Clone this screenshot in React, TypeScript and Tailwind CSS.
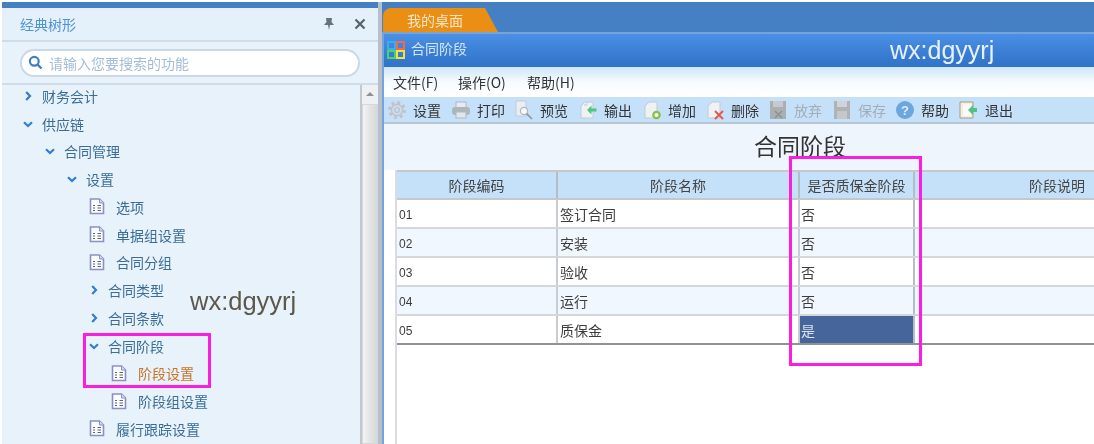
import React from "react";

const font = { fontFamily: '"Noto Sans CJK SC", "Liberation Sans", sans-serif' };

function Chevron({ open }: { open: boolean }) {
  return (
    <svg width="12" height="12" viewBox="0 0 12 12" className="shrink-0">
      <path
        d={open ? "M2 4.2 L6 8 L10 4.2" : "M4.2 2 L8 6 L4.2 10"}
        fill="none"
        stroke="#2f7fd0"
        strokeWidth="2.2"
      />
    </svg>
  );
}

function Doc() {
  return (
    <svg width="16" height="17" viewBox="0 0 16 17" className="shrink-0">
      <path d="M1.5 1 H10.5 L14.5 5 V15.5 H1.5 Z" fill="#fbfcfe" stroke="#8a90c6" strokeWidth="1.6" />
      <path d="M10.5 1 V5 H14.5" fill="#d5dcef" stroke="#8a90c6" strokeWidth="1" />
      <path d="M4 7.5 H6 M8.5 7.5 H12 M4 10 H6 M8.5 10 H12 M4 12.5 H6 M8.5 12.5 H12" stroke="#5a6672" strokeWidth="1.2" />
    </svg>
  );
}

function TreeRow({ label, pad, gap, chevron, doc, selected }: { label: string; pad: string; gap: string; chevron?: "open" | "closed"; doc?: boolean; selected?: boolean }) {
  return (
    <div className={`flex h-[27.75px] items-center ${pad} ${gap}`}>
      {chevron && <Chevron open={chevron === "open"} />}
      {doc && <Doc />}
      <span className={selected ? "text-[#c97428]" : "text-[#3a6e98]"}>{label}</span>
    </div>
  );
}

function ToolIcon({ kind }: { kind: string }) {
  const page = "M3 6 L7 2 H15 V18 H3 Z";
  return (
    <svg width="20" height="20" viewBox="0 0 20 20" className="shrink-0">
      {kind === "gear" && (
        <g fill="none" stroke="#c0c4c9">
          <circle cx="10" cy="10" r="7.5" strokeWidth="3" strokeDasharray="3 2.9" />
          <circle cx="10" cy="10" r="5.6" strokeWidth="1.6" />
          <circle cx="10" cy="10" r="2.4" strokeWidth="1.4" />
        </g>
      )}
      {kind === "print" && (
        <g>
          <rect x="5" y="2" width="10" height="6" fill="#e6ebf0" stroke="#b0b8c0" />
          <rect x="1" y="7" width="18" height="8" rx="3" fill="#aeb6bd" />
          <rect x="5" y="12" width="10" height="6" fill="#e2e7ec" stroke="#b0b8c0" />
        </g>
      )}
      {kind === "preview" && (
        <g fill="none">
          <path d="M2 1 H12 V16 H2 Z" fill="#e9eef3" stroke="#c5ccd3" />
          <circle cx="10" cy="11" r="3.6" fill="#f5f8fb" stroke="#aeb7bf" strokeWidth="1.2" />
          <path d="M12.6 13.6 L18 19" stroke="#8b959f" strokeWidth="1.6" />
        </g>
      )}
      {kind === "output" && (
        <g>
          <path d={page} fill="#eef2f5" stroke="#c3cad1" />
          <path d="M6 5 H9 V2" fill="none" stroke="#c3cad1" />
          <path d="M18.5 8.5 H13.5 V5.5 L9 10 L13.5 14.5 V11.5 H18.5 Z" fill="#4cc585" />
        </g>
      )}
      {kind === "add" && (
        <g>
          <path d={page} fill="#eef2f5" stroke="#c3cad1" />
          <circle cx="14.5" cy="15" r="3.2" fill="#f7fbf0" stroke="#86bf45" strokeWidth="2.2" />
        </g>
      )}
      {kind === "delete" && (
        <g>
          <path d={page} fill="#eef2f5" stroke="#c3cad1" />
          <path d="M10 11 L18 19 M18 11 L10 19" stroke="#e4594c" strokeWidth="2" />
        </g>
      )}
      {kind === "discard" && (
        <g>
          <path d="M2 1 H18 V19 H2 Z" fill="#aab0b2" />
          <rect x="5" y="1" width="10" height="6" fill="#c6cacc" />
          <path d="M7 11 L14 18 M14 11 L7 18" stroke="#8d9294" strokeWidth="1.6" />
        </g>
      )}
      {kind === "save" && (
        <g>
          <path d="M2 1 H18 V19 H2 Z" fill="#aeb3b5" />
          <rect x="5" y="1" width="10" height="6" fill="#d0d4d6" />
          <rect x="5" y="11" width="10" height="8" fill="#c4c8ca" />
        </g>
      )}
      {kind === "help" && (
        <g>
          <circle cx="10" cy="10" r="9" fill="#6ba6dd" />
          <text x="10" y="14.5" textAnchor="middle" fontSize="13" fontFamily="Liberation Sans" fontWeight="700" fill="#dcebf8">?</text>
        </g>
      )}
      {kind === "exit" && (
        <g>
          <path d="M1 2 H14 V18 H1 Z" fill="#f4efe0" stroke="#a89a80" />
          <path d="M4 4 H12 V16 H4 Z" fill="#fbfaf4" />
          <path d="M9 10 L14 5 V8 H18 V12 H14 V15 Z" fill="#4cc585" />
        </g>
      )}
    </svg>
  );
}

const tools = [
  { icon: "gear", label: "设置", w: "w-[64px]" },
  { icon: "print", label: "打印", w: "w-[63px]" },
  { icon: "preview", label: "预览", w: "w-[64px]" },
  { icon: "output", label: "输出", w: "w-[64px]" },
  { icon: "add", label: "增加", w: "w-[63px]" },
  { icon: "delete", label: "删除", w: "w-[63px]" },
  { icon: "discard", label: "放弃", w: "w-[64px]", off: true },
  { icon: "save", label: "保存", w: "w-[63px]", off: true },
  { icon: "help", label: "帮助", w: "w-[64px]" },
  { icon: "exit", label: "退出", w: "w-[64px]" },
];

const rows = [
  { code: "01", name: "签订合同", flag: "否" },
  { code: "02", name: "安装", flag: "否" },
  { code: "03", name: "验收", flag: "否" },
  { code: "04", name: "运行", flag: "否" },
  { code: "05", name: "质保金", flag: "是" },
];

export default function App() {
  return (
    <div className="relative h-[444px] w-[1094px] overflow-hidden bg-white pt-[2px] pl-[2px] text-[14px] leading-none blur-[0.6px]" style={font}>
      <div className="flex h-[442px]">
        {/* Sidebar */}
        <aside className="relative flex w-[376px] shrink-0 flex-col border-t-[6px] border-[#4680c4] bg-[#e8f2fb]">
          <div className="flex h-[34px] shrink-0 items-center border-b-2 border-[#cfdde9] bg-[#e4f0fa] pl-[18px] pr-[12px]">
            <span className="text-[#4f93d4]">经典树形</span>
            <svg width="14" height="14" viewBox="0 0 14 14" className="ml-auto mr-[18px]">
              <path d="M4 1 H10 L9.5 5 L12 8 H8 L7 13 L6 8 H2 L4.5 5 Z" fill="#66727c" />
            </svg>
            <svg width="12" height="12" viewBox="0 0 12 12">
              <path d="M1.5 1.5 L10.5 10.5 M10.5 1.5 L1.5 10.5" stroke="#56626c" strokeWidth="2.2" />
            </svg>
          </div>
          <div className="flex h-[43px] shrink-0 items-center border-b-2 border-[#cfdde9] pl-[18px] pr-[18px]">
            <div className="flex h-[28px] w-[340px] items-center gap-[6px] rounded-full border-2 border-[#c9d9e8] bg-white pl-[6px]">
              <svg width="15" height="15" viewBox="0 0 15 15">
                <circle cx="6.3" cy="6.3" r="4.4" fill="none" stroke="#3f7fc0" strokeWidth="2.2" />
                <path d="M9.5 9.5 L13.5 13.5" stroke="#3f7fc0" strokeWidth="2.4" />
              </svg>
              <span className="text-[#a3bdd6]">请输入您要搜索的功能</span>
            </div>
          </div>
          <div className="flex min-h-0 flex-1">
            <div className="-mt-[3px] min-w-0 flex-1">
              <TreeRow label="财务会计" pad="pl-[20px]" gap="gap-[8px]" chevron="closed" />
              <TreeRow label="供应链" pad="pl-[20px]" gap="gap-[8px]" chevron="open" />
              <TreeRow label="合同管理" pad="pl-[42px]" gap="gap-[8px]" chevron="open" />
              <TreeRow label="设置" pad="pl-[64px]" gap="gap-[8px]" chevron="open" />
              <TreeRow label="选项" pad="pl-[87px]" gap="gap-[11px]" doc />
              <TreeRow label="单据组设置" pad="pl-[87px]" gap="gap-[11px]" doc />
              <TreeRow label="合同分组" pad="pl-[87px]" gap="gap-[11px]" doc />
              <TreeRow label="合同类型" pad="pl-[86px]" gap="gap-[8px]" chevron="closed" />
              <TreeRow label="合同条款" pad="pl-[86px]" gap="gap-[8px]" chevron="closed" />
              <TreeRow label="合同阶段" pad="pl-[86px]" gap="gap-[8px]" chevron="open" />
              <TreeRow label="阶段设置" pad="pl-[109px]" gap="gap-[11px]" doc selected />
              <TreeRow label="阶段组设置" pad="pl-[109px]" gap="gap-[11px]" doc />
              <TreeRow label="履行跟踪设置" pad="pl-[87px]" gap="gap-[11px]" doc />
            </div>
            <div className="flex w-[18px] shrink-0 flex-col border-l-2 border-[#c3c8cd] bg-[#eef1f4]">
              <div className="flex h-[19px] shrink-0 items-center justify-center pb-[2px]">
                <div className="h-0 w-0 border-x-[4px] border-b-[4px] border-x-transparent border-b-[#8b9298]" />
              </div>
              <div className="flex-1 border border-[#d5d8db] bg-gradient-to-r from-[#f4f4f4] via-[#e4e4e4] to-[#d8d8d8]" />
            </div>
          </div>
          <span className="absolute left-[188px] top-[281px] text-[25.5px] text-[#5c584c]" style={{ fontFamily: '"Liberation Sans", sans-serif' }}>
            wx:dgyyrj
          </span>
        </aside>

        <div className="w-[4px] shrink-0 bg-[#b7bfcc]" />

        {/* Main */}
        <main className="flex min-w-0 flex-1 flex-col">
          <div className="flex h-[30px] shrink-0 items-end bg-[#4680c4] pl-px">
            <div className="flex h-[24px] w-[115px] items-center rounded-tl-[8px] bg-[#ea8e14] pl-[24px] text-[#f7e6c8] [clip-path:polygon(0_0,102px_0,100%_100%,0_100%)]">
              我的桌面
            </div>
          </div>
          <section className="flex min-h-0 flex-1 flex-col border-l-2 border-t-2 border-[#74a4d9] bg-white">
            <div className="flex h-[33px] shrink-0 items-center bg-gradient-to-b from-[#4a90e6] to-[#2f72c6] pl-[3px]">
              <svg width="18" height="18" viewBox="0 0 18 18" className="-mt-[2px]">
                <rect x="1" y="1" width="7" height="7" fill="none" stroke="#35b0e8" strokeWidth="2" />
                <rect x="10" y="1" width="7" height="7" fill="none" stroke="#ef6a50" strokeWidth="2" />
                <rect x="1" y="10" width="7" height="7" fill="none" stroke="#4fd070" strokeWidth="2" />
                <rect x="10" y="10" width="7" height="7" fill="none" stroke="#f5e23c" strokeWidth="2" />
              </svg>
              <span className="-mt-[5px] ml-[6px] text-[#d4e5f8]">合同阶段</span>
              <span className="ml-[423px] text-[25px] text-[#e8f1fb]" style={{ fontFamily: '"Liberation Sans", sans-serif' }}>
                wx:dgyyrj
              </span>
            </div>
            <div className="flex h-[30px] shrink-0 items-center bg-gradient-to-b from-[#cde6f6] via-[#f6fbfe] to-white pl-[9px] text-[#333]">
              <span className="w-[65px]">文件(F)</span>
              <span className="w-[69px]">操作(O)</span>
              <span>帮助(H)</span>
            </div>
            <div className="flex h-[27px] shrink-0 items-center border-b-2 border-[#b9c6d2] bg-[#c5e1fa] pl-[3px] text-[#333]">
              {tools.map((t) => (
                <div key={t.label} className={`flex items-center gap-[6px] ${t.w}`}>
                  <ToolIcon kind={t.icon} />
                  <span className={t.off ? "text-[#a3adb5]" : ""}>{t.label}</span>
                </div>
              ))}
            </div>
            <div className="flex h-[46px] shrink-0 items-center justify-center bg-[#eef5fc] pb-[3px] pl-[122px] text-[23px] text-[#333]">
              合同阶段
            </div>
            <div className="flex min-h-0 flex-1 bg-white pl-[11px]">
              <div className="min-w-0 flex-1 border-l-2 border-[#d9dde2]">
                <div className="flex h-[30px] border-y-2 border-[#c3c8cc] bg-[#c5e1fa] text-[#444]">
                  <div className="flex w-[161px] shrink-0 items-center justify-center border-r-2 border-[#b4bcc4]">阶段编码</div>
                  <div className="flex w-[242px] shrink-0 items-center justify-center border-r-2 border-[#b4bcc4]">阶段名称</div>
                  <div className="flex w-[115px] shrink-0 items-center justify-center border-r-2 border-[#b4bcc4]">是否质保金阶段</div>
                  <div className="flex flex-1 items-center justify-end pr-[9px]">阶段说明</div>
                </div>
                {rows.map((r, i) => (
                  <div key={r.code} className={`flex h-[29px] border-b-2 ${i === 4 ? "border-[#8f9396]" : "border-[#d4d7da]"} ${i % 2 === 1 ? "bg-[#f1f7fe]" : "bg-white"} text-[#3c3c3c]`}>
                    <div className="flex w-[161px] shrink-0 items-center border-r-2 border-[#c9cdd1] pl-[2px] pt-[3px] text-[12px]" style={{ fontFamily: '"Liberation Sans", sans-serif' }}>{r.code}</div>
                    <div className="flex w-[242px] shrink-0 items-center border-r-2 border-[#c9cdd1] pl-[2px]">{r.name}</div>
                    <div className={`flex w-[115px] shrink-0 items-center border-r-2 border-[#b4bcc4] pl-[1px] ${i === 4 ? "bg-[#45659b] text-[#d8e2f2]" : ""}`}>{r.flag}</div>
                    <div className="flex-1" />
                  </div>
                ))}
              </div>
            </div>
          </section>
        </main>
      </div>

      {/* Annotation frames */}
      <div className="absolute left-[83px] top-[333px] h-[55px] w-[128px] border-[3px] border-[#fb1ee0]" />
      <div className="absolute left-[789px] top-[156px] h-[210px] w-[133px] border-[3px] border-[#fb1ee0]" />
    </div>
  );
}
